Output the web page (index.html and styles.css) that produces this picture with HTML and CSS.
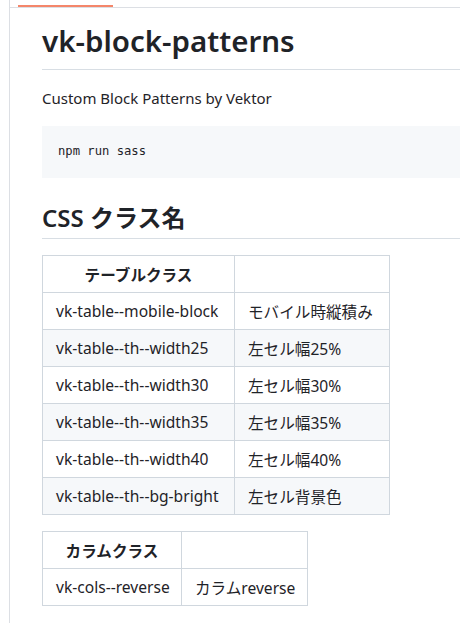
FILE: index.html
```html
<!DOCTYPE html>
<html lang="ja">
<head>
<meta charset="utf-8">
<title>vk-block-patterns</title>
<link rel="stylesheet" href="styles.css">
</head>
<body>
<div class="pane">
  <div class="tabbar"><span class="tab-active"></span></div>
  <div class="content">
    <h1>vk-block-patterns</h1>
    <p>Custom Block Patterns by Vektor</p>
    <pre><code>npm run sass</code></pre>
    <h2>CSS クラス名</h2>
    <table class="t1">
      <thead>
        <tr><th>テーブルクラス</th><th></th></tr>
      </thead>
      <tbody>
        <tr><td>vk-table--mobile-block</td><td>モバイル時縦積み</td></tr>
        <tr><td>vk-table--th--width25</td><td>左セル幅25%</td></tr>
        <tr><td>vk-table--th--width30</td><td>左セル幅30%</td></tr>
        <tr><td>vk-table--th--width35</td><td>左セル幅35%</td></tr>
        <tr><td>vk-table--th--width40</td><td>左セル幅40%</td></tr>
        <tr><td>vk-table--th--bg-bright</td><td>左セル背景色</td></tr>
      </tbody>
    </table>
    <table class="t2">
      <thead>
        <tr><th>カラムクラス</th><th></th></tr>
      </thead>
      <tbody>
        <tr><td>vk-cols--reverse</td><td>カラムreverse</td></tr>
      </tbody>
    </table>
  </div>
</div>
</body>
</html>
```
FILE: styles.css
```css
html, body {
  margin: 0;
  padding: 0;
  background: #ffffff;
  overflow: hidden;
}
body {
  width: 460px;
  height: 623px;
  font-family: "Noto Sans", "Noto Sans CJK JP", sans-serif;
  color: #1f2328;
}
.pane {
  margin-left: 9px;
  border-left: 1px solid #dcdfe4;
  height: 623px;
  overflow: hidden;
}
.tabbar {
  height: 7px;
  border-bottom: 1px solid #dcdfe4;
  display: flex;
  align-items: flex-end;
}
.tab-active {
  margin-left: 8px;
  width: 95px;
  height: 2px;
  background: #f4866a;
}
.content {
  padding-left: 32px;
  width: 600px;
}
h1 {
  font-size: 29.5px;
  font-weight: 600;
  line-height: 40px;
  margin: 13px 0 16px;
  padding-bottom: 8px;
  border-bottom: 1px solid #d8dee4;
}
p {
  font-size: 15px;
  line-height: 24px;
  margin: 0 0 16px;
}
pre {
  background: #f6f8fa;
  margin: 0;
  padding: 16px;
  font-family: "Liberation Mono", "DejaVu Sans Mono", monospace;
  font-size: 12.2px;
  line-height: 19px;
}
h2 {
  font-size: 24px;
  font-weight: 600;
  line-height: 30px;
  margin: 25px 0 16px;
  padding-bottom: 5px;
  border-bottom: 1px solid #d8dee4;
}
table {
  border-collapse: collapse;
  table-layout: fixed;
  font-size: 15.6px;
  margin-bottom: 16px;
}
th, td {
  box-sizing: border-box;
  border: 1px solid #d0d7de;
  padding: 0 13px;
  height: 37px;
  text-align: left;
  white-space: nowrap;
}
th {
  font-weight: 700;
  text-align: center;
}
tbody tr:nth-child(2n) {
  background: #f6f8fa;
}
.t1 { width: 348px; }
.t1 th:first-child { width: 192px; }
.t2 { width: 266px; }
.t2 th:first-child { width: 139px; }
```
